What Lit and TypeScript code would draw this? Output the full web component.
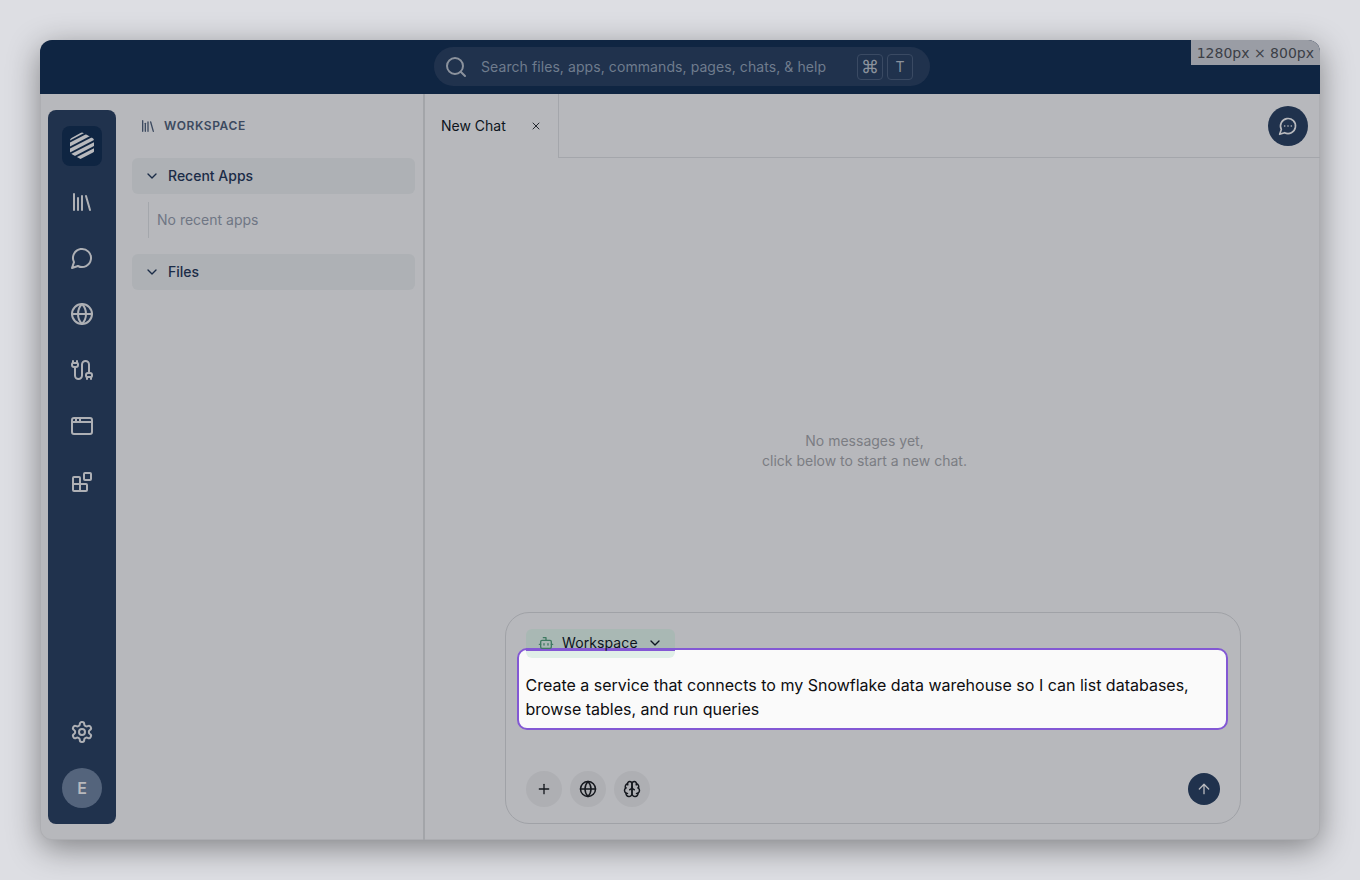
import { LitElement, css, html, svg } from 'lit';
import { customElement } from 'lit/decorators.js';

const icon = (size: number, width: number, body: unknown) => html`
  <svg
    width=${size}
    height=${size}
    viewBox="0 0 24 24"
    fill="none"
    stroke="currentColor"
    stroke-width=${width}
    stroke-linecap="round"
    stroke-linejoin="round"
  >
    ${body}
  </svg>
`;

const paths = (...d: string[]) => d.map((p) => svg`<path d=${p} />`);

const LIBRARY = paths('m16 6 4 14', 'M12 6v14', 'M8 8v12', 'M4 4v16');
const CHAT = paths('M7.9 20A9 9 0 1 0 4 16.1L2 22Z');
const CHAT_MORE = paths('M7.9 20A9 9 0 1 0 4 16.1L2 22Z', 'M8 12h.01', 'M12 12h.01', 'M16 12h.01');
const GLOBE = svg`<circle cx="12" cy="12" r="10" /><path d="M12 2a14.5 14.5 0 0 0 0 20 14.5 14.5 0 0 0 0-20" /><path d="M2 12h20" />`;
const CABLE = paths(
  'M17 21v-2a1 1 0 0 1-1-1v-1a2 2 0 0 1 2-2h2a2 2 0 0 1 2 2v1a1 1 0 0 1-1 1',
  'M19 15V6.5a1 1 0 0 0-7 0v11a1 1 0 0 1-7 0V9',
  'M21 21v-2h-4',
  'M3 5h4V3',
  'M7 5a1 1 0 0 1 1 1v1a2 2 0 0 1-2 2H4a2 2 0 0 1-2-2V6a1 1 0 0 1 1-1V3',
);
const APP_WINDOW = svg`<rect x="2" y="4" width="20" height="16" rx="2" /><path d="M10 4v4" /><path d="M2 8h20" /><path d="M6 4v4" />`;
const BLOCKS = svg`<rect x="14" y="3" width="7" height="7" rx="1" /><path d="M10 21V8a1 1 0 0 0-1-1H4a1 1 0 0 0-1 1v12a1 1 0 0 0 1 1h12a1 1 0 0 0 1-1v-5a1 1 0 0 0-1-1H3" />`;
const SETTINGS = svg`<path d="M12.22 2h-.44a2 2 0 0 0-2 2v.18a2 2 0 0 1-1 1.73l-.43.25a2 2 0 0 1-2 0l-.15-.08a2 2 0 0 0-2.73.73l-.22.38a2 2 0 0 0 .73 2.73l.15.1a2 2 0 0 1 1 1.72v.51a2 2 0 0 1-1 1.74l-.15.09a2 2 0 0 0-.73 2.73l.22.38a2 2 0 0 0 2.73.73l.15-.08a2 2 0 0 1 2 0l.43.25a2 2 0 0 1 1 1.73V20a2 2 0 0 0 2 2h.44a2 2 0 0 0 2-2v-.18a2 2 0 0 1 1-1.73l.43-.25a2 2 0 0 1 2 0l.15.08a2 2 0 0 0 2.73-.73l.22-.39a2 2 0 0 0-.73-2.73l-.15-.08a2 2 0 0 1-1-1.74v-.5a2 2 0 0 1 1-1.74l.15-.09a2 2 0 0 0 .73-2.73l-.22-.38a2 2 0 0 0-2.73-.73l-.15.08a2 2 0 0 1-2 0l-.43-.25a2 2 0 0 1-1-1.73V4a2 2 0 0 0-2-2z" /><circle cx="12" cy="12" r="3" />`;
const BOT = svg`<path d="M12 8V4H8" /><rect x="4" y="8" width="16" height="12" rx="2" /><path d="M2 14h2" /><path d="M20 14h2" /><path d="M15 13v2" /><path d="M9 13v2" />`;
const CHEVRON = paths('m6 9 6 6 6-6');
const SEARCH = svg`<circle cx="11" cy="11" r="8" /><path d="m21 21-4.3-4.3" />`;
const CLOSE = paths('M18 6 6 18', 'm6 6 12 12');
const PLUS = paths('M5 12h14', 'M12 5v14');
const ARROW_UP = paths('m5 12 7-7 7 7', 'M12 19V5');
const BRAIN = paths(
  'M12 5a3 3 0 1 0-5.997.125 4 4 0 0 0-2.526 5.77 4 4 0 0 0 .556 6.588A4 4 0 1 0 12 18Z',
  'M12 5a3 3 0 1 1 5.997.125 4 4 0 0 1 2.526 5.77 4 4 0 0 1-.556 6.588A4 4 0 1 1 12 18Z',
  'M15 13a4.5 4.5 0 0 1-3-4 4.5 4.5 0 0 1-3 4',
  'M17.599 6.5a3 3 0 0 0 .399-1.375',
  'M6.003 5.125A3 3 0 0 0 6.401 6.5',
  'M3.477 10.896a4 4 0 0 1 .585-.396',
  'M19.938 10.5a4 4 0 0 1 .585.396',
  'M6 18a4 4 0 0 1-1.967-.516',
  'M19.967 17.484A4 4 0 0 1 18 18',
);

// hexagon cut into diagonal stripes
const LOGO = html`
  <svg width="24" height="28" viewBox="0 0 24 28">
    <defs>
      <clipPath id="hex">
        <path d="M10.5.9Q12 0 13.5.9L22.5 6.1Q24 7 24 8.7V19.3Q24 21 22.5 21.9L13.5 27.1Q12 28 10.5 27.1L1.5 21.9Q0 21 0 19.3V8.7Q0 7 1.5 6.1Z" />
      </clipPath>
    </defs>
    <g clip-path="url(#hex)" stroke="#b8b9bd" stroke-width="3.4">
      <path d="M-2 7.5 22 -5" />
      <path d="M-2 13.5 28 -2" />
      <path d="M-2 19.5 28 4" />
      <path d="M-2 25.5 28 10" />
      <path d="M-2 31.5 28 16" />
      <path d="M2 35.5 28 22" />
    </g>
  </svg>
`;

@customElement('app-root')
export class AppRoot extends LitElement {
  render() {
    const railIcons = [LIBRARY, CHAT, GLOBE, CABLE, APP_WINDOW, BLOCKS];
    return html`
      <div class="window">
        <header class="topbar">
          <div class="search">
            <span class="search-icon">${icon(24, 2, SEARCH)}</span>
            <span class="search-text">Search files, apps, commands, pages, chats, &amp; help</span>
            <span class="kbd cmd">⌘</span>
            <span class="kbd">T</span>
          </div>
          <div class="viewport">1280px × 800px</div>
        </header>
        <div class="body">
          <nav class="rail">
            <div class="logo">${LOGO}</div>
            ${railIcons.map((i) => html`<div class="rail-item">${icon(24, 2, i)}</div>`)}
            <div class="spacer"></div>
            <div class="rail-item">${icon(24, 2, SETTINGS)}</div>
            <div class="avatar">E</div>
          </nav>
          <aside class="panel">
            <div class="panel-title">
              ${icon(16, 2, LIBRARY)}
              <span>WORKSPACE</span>
            </div>
            <div class="section">${icon(16, 2, CHEVRON)}<span>Recent Apps</span></div>
            <div class="empty-apps"><span>No recent apps</span></div>
            <div class="section">${icon(16, 2, CHEVRON)}<span>Files</span></div>
          </aside>
          <main class="main">
            <div class="tabs">
              <div class="tab">
                <span>New Chat</span>
                <span class="close">${icon(12, 2, CLOSE)}</span>
              </div>
              <div class="tabs-rest">
                <div class="new-chat">${icon(20, 2, CHAT_MORE)}</div>
              </div>
            </div>
            <div class="chat">
              <div class="messages">No messages yet,<br />click below to start a new chat.</div>
              <div class="composer">
                <div class="agent">
                  <span class="bot">${icon(16, 2, BOT)}</span>
                  <span>Workspace</span>
                  <span class="agent-chevron">${icon(16, 2, CHEVRON)}</span>
                </div>
                <div class="prompt">
                  Create a service that connects to my Snowflake data warehouse so I can list
                  databases, browse tables, and run queries
                </div>
                <div class="actions">
                  <div class="round">${icon(16, 2, PLUS)}</div>
                  <div class="round">${icon(18, 2, GLOBE)}</div>
                  <div class="round">${icon(18, 2, BRAIN)}</div>
                  <div class="spacer"></div>
                  <div class="send">${icon(16, 2, ARROW_UP)}</div>
                </div>
              </div>
            </div>
          </main>
        </div>
      </div>
    `;
  }

  static styles = css`
    :host {
      display: block;
      box-sizing: border-box;
      width: 1360px;
      height: 880px;
      padding: 40px;
      background: #dddee3;
      font-family: Inter, 'Liberation Sans', sans-serif;
      font-size: 14px;
      line-height: 20px;
      color: #0d1420;
    }
    svg {
      display: block;
      flex: none;
    }
    .spacer {
      flex: 1;
    }
    .window {
      position: relative;
      display: flex;
      flex-direction: column;
      height: 800px;
      border-radius: 12px;
      overflow: hidden;
      background: #b7b8bc;
      box-shadow:
        0 8px 32px rgba(0, 0, 0, 0.42),
        inset 0 0 0 1px rgba(0, 0, 0, 0.05);
    }
    .topbar {
      display: flex;
      flex: none;
      justify-content: center;
      align-items: center;
      box-sizing: border-box;
      height: 54px;
      background: #0f2542;
      padding: 0 0 1px 4px;
    }
    .search {
      display: flex;
      align-items: center;
      box-sizing: border-box;
      width: 496px;
      height: 39px;
      padding: 0 17px 0 10px;
      border-radius: 20px;
      background: #20324d;
      color: #6f7c8d;
    }
    .search-icon {
      color: #8b929d;
      margin-right: 13px;
    }
    .search-text {
      flex: 1;
      font-size: 14px;
      letter-spacing: 0.08px;
      white-space: nowrap;
    }
    .kbd {
      display: flex;
      align-items: center;
      justify-content: center;
      box-sizing: border-box;
      width: 26px;
      height: 26px;
      margin-left: 4px;
      border: 1px solid #3a4a63;
      border-radius: 4px;
      font-size: 14px;
      color: #8b929d;
    }
    .cmd {
      font-size: 18px;
    }
    .viewport {
      position: absolute;
      top: 0;
      right: 0;
      padding: 0 6px;
      height: 25px;
      line-height: 26px;
      background: #9a9da5;
      color: #3c3f47;
      font-family: 'DejaVu Sans', sans-serif;
      font-size: 14px;
    }
    .body {
      display: flex;
      flex: 1;
      min-height: 0;
    }
    .rail {
      display: flex;
      flex: none;
      flex-direction: column;
      align-items: center;
      width: 68px;
      margin: 16px 0 16px 8px;
      padding: 16px 0;
      box-sizing: border-box;
      border-radius: 8px;
      background: #20324d;
      color: #aeb0b5;
    }
    .logo {
      display: flex;
      align-items: center;
      justify-content: center;
      flex: none;
      width: 40px;
      height: 40px;
      border-radius: 8px;
      background: #0f2542;
      margin-bottom: 8px;
    }
    .rail-item {
      display: flex;
      align-items: center;
      justify-content: center;
      flex: none;
      width: 40px;
      height: 56px;
    }
    .avatar {
      display: flex;
      align-items: center;
      justify-content: center;
      flex: none;
      width: 40px;
      height: 40px;
      margin-top: 8px;
      border-radius: 50%;
      background: #54647c;
      color: #b8b9bd;
      font-weight: 600;
      font-size: 16px;
    }
    .panel {
      flex: none;
      box-sizing: border-box;
      width: 309px;
      padding: 0 8px 0 16px;
      border-right: 2px solid #a3a5a9;
      color: #1b2c47;
    }
    .panel-title {
      display: flex;
      align-items: center;
      gap: 8px;
      height: 64px;
      padding-left: 8px;
      color: #3c4a60;
      font-size: 12px;
      font-weight: 600;
      letter-spacing: 0.6px;
    }
    .section {
      display: flex;
      align-items: center;
      gap: 8px;
      height: 36px;
      padding-left: 12px;
      border-radius: 6px;
      background: #aeb1b5;
      font-size: 14px;
      font-weight: 500;
    }
    .empty-apps {
      display: flex;
      align-items: center;
      height: 36px;
      margin: 8px 0 16px 16px;
      padding-left: 8px;
      border-left: 1px solid #a4a7ac;
      color: #6f7684;
      font-size: 14px;
    }
    .main {
      display: flex;
      flex: 1;
      flex-direction: column;
      min-width: 0;
    }
    .tabs {
      display: flex;
      flex: none;
      height: 64px;
    }
    .tab {
      display: flex;
      align-items: center;
      justify-content: space-between;
      box-sizing: border-box;
      width: 134px;
      padding: 0 16px;
      border-right: 1px solid #a4a6ab;
      color: #0d1420;
    }
    .close {
      color: #22262e;
    }
    .tabs-rest {
      display: flex;
      flex: 1;
      align-items: center;
      justify-content: flex-end;
      padding-right: 12px;
      border-bottom: 1px solid #a4a6ab;
    }
    .new-chat {
      display: flex;
      align-items: center;
      justify-content: center;
      width: 40px;
      height: 40px;
      border-radius: 50%;
      background: #20324d;
      color: #b8b9bd;
    }
    .chat {
      display: flex;
      flex: 1;
      flex-direction: column;
      align-items: center;
      min-height: 0;
      padding: 0 79px 16px 80px;
    }
    .messages {
      display: flex;
      flex: 1;
      align-items: center;
      justify-content: center;
      box-sizing: border-box;
      text-align: center;
      width: 100%;
      margin-left: -17px;
      padding-top: 132px;
      color: #7b7d83;
    }
    .composer {
      position: relative;
      display: flex;
      flex: none;
      flex-direction: column;
      justify-content: space-between;
      align-items: flex-start;
      box-sizing: border-box;
      width: 736px;
      height: 212px;
      padding: 16px 20px 16px 20px;
      border: 1px solid #a0a2a7;
      border-radius: 24px;
    }
    .agent {
      position: relative;
      z-index: 1;
      display: flex;
      align-items: center;
      gap: 8px;
      box-sizing: border-box;
      width: 149px;
      height: 29px;
      padding: 0 12px 1px;
      border-radius: 6px;
      background: linear-gradient(
        #a9b8b4 0 19.5px,
        #8358d4 19.5px 21.5px,
        #e0efe8 21.5px
      );
      font-size: 14px;
      letter-spacing: 0.1px;
    }
    .agent-chevron {
      margin-left: 1px;
    }
    .bot {
      color: #3f7a62;
    }
    .prompt {
      position: absolute;
      left: 11px;
      top: 35px;
      box-sizing: border-box;
      width: 711px;
      height: 82px;
      padding: 23px 7px 0 6.5px;
      border: 2px solid #8358d4;
      border-radius: 10px;
      background: #fafafa;
      font-size: 16px;
      line-height: 24px;
      color: #0d0d10;
    }
    .actions {
      display: flex;
      align-items: center;
      gap: 8px;
      width: 100%;
      color: #15181e;
    }
    .round {
      display: flex;
      align-items: center;
      justify-content: center;
      width: 36px;
      height: 36px;
      border-radius: 50%;
      background: #aeafb3;
    }
    .send {
      display: flex;
      align-items: center;
      justify-content: center;
      width: 32px;
      height: 32px;
      border-radius: 50%;
      background: #20324d;
      color: #b8b9bd;
    }
  `;
}

declare global {
  interface HTMLElementTagNameMap {
    'app-root': AppRoot;
  }
}
